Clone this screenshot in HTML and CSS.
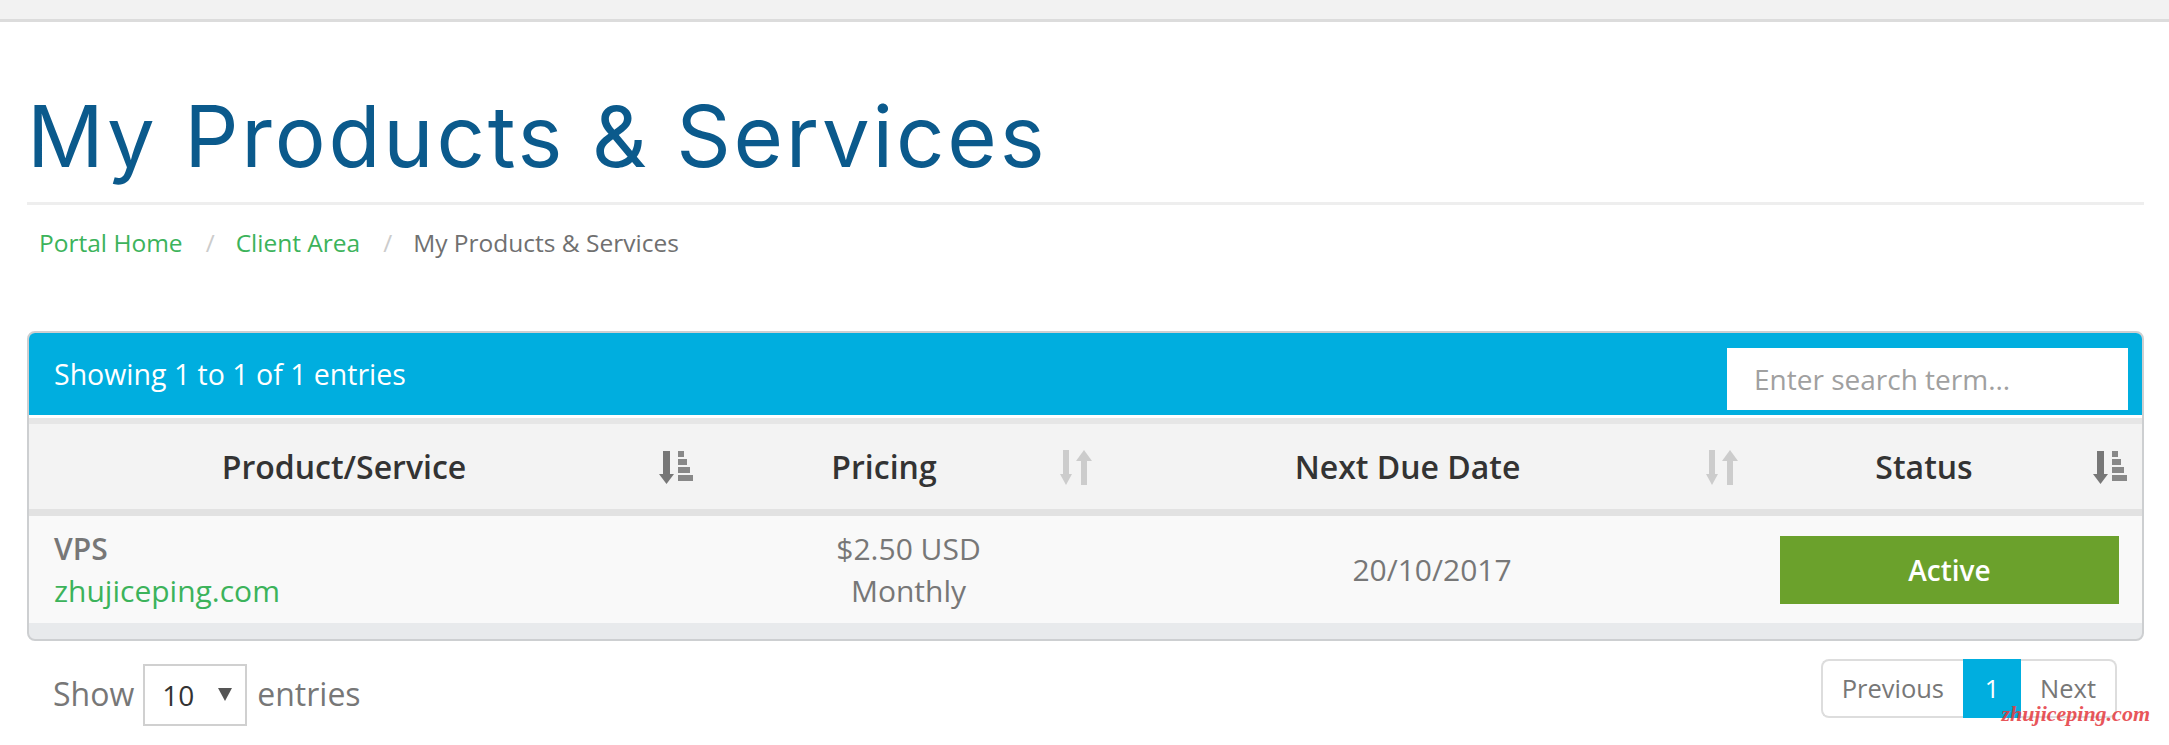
FILE: index.html
```html
<!DOCTYPE html>
<html lang="en">
<head>
    <meta charset="UTF-8">
    <meta name="viewport" content="width=device-width, initial-scale=1.0">
    <title>My Products &amp; Services</title>
    <link rel="stylesheet" href="styles.css">
</head>
<body>
    <div class="topbar"></div>

    <div class="main">
        <div class="page-header">
            <h1>My Products &amp; Services</h1>
        </div>

        <ol class="breadcrumb">
            <li><a href="#">Portal Home</a></li>
            <li><a href="#">Client Area</a></li>
            <li class="active">My Products &amp; Services</li>
        </ol>

        <div class="panel">
            <div class="panel-head">
                <div class="info">Showing 1 to 1 of 1 entries</div>
                <input class="search" type="text" placeholder="Enter search term...">
            </div>

            <table class="products">
                <colgroup>
                    <col class="c-product">
                    <col class="c-pricing">
                    <col class="c-due">
                    <col class="c-status">
                </colgroup>
                <thead>
                    <tr>
                        <th>
                            <div class="th-inner">
                                <span class="th-label">Product/Service</span>
                                <svg class="sort-icon" width="34" height="36" viewBox="0 0 34 36">
                                    <rect x="4" y="2" width="7" height="25" fill="#777"/>
                                    <polygon points="0,25 15,25 7.5,35" fill="#777"/>
                                    <rect x="19" y="2" width="6" height="6" fill="#888"/>
                                    <rect x="19" y="10" width="9" height="6" fill="#888"/>
                                    <rect x="19" y="18" width="12" height="6" fill="#888"/>
                                    <rect x="19" y="26" width="15" height="6" fill="#888"/>
                                </svg>
                            </div>
                        </th>
                        <th>
                            <div class="th-inner">
                                <span class="th-label">Pricing</span>
                                <svg class="sort-icon" width="34" height="36" viewBox="0 0 34 36">
                                    <rect x="3" y="1" width="6" height="26" fill="#ccc"/>
                                    <polygon points="0,25 12,25 6,36" fill="#ccc"/>
                                    <rect x="21" y="10" width="6" height="26" fill="#ccc"/>
                                    <polygon points="16,12 32,12 24,1" fill="#ccc"/>
                                </svg>
                            </div>
                        </th>
                        <th>
                            <div class="th-inner">
                                <span class="th-label">Next Due Date</span>
                                <svg class="sort-icon" width="34" height="36" viewBox="0 0 34 36">
                                    <rect x="3" y="1" width="6" height="26" fill="#ccc"/>
                                    <polygon points="0,25 12,25 6,36" fill="#ccc"/>
                                    <rect x="21" y="10" width="6" height="26" fill="#ccc"/>
                                    <polygon points="16,12 32,12 24,1" fill="#ccc"/>
                                </svg>
                            </div>
                        </th>
                        <th>
                            <div class="th-inner">
                                <span class="th-label">Status</span>
                                <svg class="sort-icon" width="34" height="36" viewBox="0 0 34 36">
                                    <rect x="4" y="2" width="7" height="25" fill="#777"/>
                                    <polygon points="0,25 15,25 7.5,35" fill="#777"/>
                                    <rect x="19" y="2" width="6" height="6" fill="#888"/>
                                    <rect x="19" y="10" width="9" height="6" fill="#888"/>
                                    <rect x="19" y="18" width="12" height="6" fill="#888"/>
                                    <rect x="19" y="26" width="15" height="6" fill="#888"/>
                                </svg>
                            </div>
                        </th>
                    </tr>
                </thead>
                <tbody>
                    <tr>
                        <td class="product">
                            <strong>VPS</strong><br>
                            <a href="#">zhujiceping.com</a>
                        </td>
                        <td class="center">$2.50 USD<br>Monthly</td>
                        <td class="center">20/10/2017</td>
                        <td class="center"><span class="status-active">Active</span></td>
                    </tr>
                </tbody>
            </table>
            <div class="panel-foot"></div>
        </div>

        <div class="table-footer">
            <div class="length">
                Show
                <span class="select-wrap">
                    <select>
                        <option>10</option>
                        <option>25</option>
                        <option>50</option>
                    </select>
                    <svg class="select-arrow" width="14" height="13" viewBox="0 0 14 13">
                        <polygon points="0,0 14,0 7,13" fill="#555"/>
                    </svg>
                </span>
                entries
            </div>

            <ul class="pagination">
                <li><a href="#">Previous</a></li>
                <li class="active"><a href="#">1</a></li>
                <li><a href="#">Next</a></li>
            </ul>

            <span class="watermark">zhujiceping.com</span>
        </div>
    </div>
</body>
</html>
```

FILE: styles.css
```css
/* Global */
body {
    margin: 0;
    font-family: 'Open Sans', 'Noto Sans', sans-serif;
    color: #333;
    background: #fff;
}

a {
    text-decoration: none;
}

.topbar {
    height: 19px;
    background-color: #f2f2f2;
    border-bottom: 3px solid #dcdcdc;
}

.main {
    padding: 0 25px 0 27px;
}

/* Page title */
.page-header {
    border-bottom: 3px solid #eee;
    padding-bottom: 22px;
}

.page-header h1 {
    margin: 72px 0 0 0;
    padding-left: 0;
    font-family: 'Inter', 'Open Sans', sans-serif;
    font-weight: 400;
    font-size: 85px;
    line-height: 86px;
    color: #0b5a8c;
    letter-spacing: 2.8px;
}

/* Breadcrumb */
.breadcrumb {
    list-style: none;
    margin: 20px 0 0 0;
    padding: 0 0 0 12px;
    display: flex;
    font-size: 24.5px;
    line-height: 36px;
}

.breadcrumb li + li::before {
    content: "/";
    color: #ccc;
    padding: 0 21px 0 23px;
}

.breadcrumb a {
    color: #3cb35b;
}

.breadcrumb .active {
    color: #707070;
}

/* Panel with table */
.panel {
    margin-top: 70px;
    border: 2px solid #cdcfd1;
    border-radius: 8px;
    overflow: hidden;
    background-color: #e8eaec;
}

.panel-head {
    height: 82px;
    background-color: #00aedf;
    display: flex;
    justify-content: space-between;
    align-items: center;
    padding: 0 14px 0 25px;
    border-bottom: 3px solid #fff;
}

.panel-head .info {
    color: #fff;
    font-size: 28.5px;
}

.search {
    align-self: flex-end;
    margin-bottom: 5px;
    width: 401px;
    height: 62px;
    box-sizing: border-box;
    border: none;
    outline: none;
    padding: 0 0 0 27px;
    font-family: 'Open Sans', sans-serif;
    font-size: 28px;
    color: #555;
    background: #fff;
}

.search::placeholder {
    color: #a0a0a0;
}

.products {
    width: 100%;
    border-collapse: collapse;
    table-layout: fixed;
}

.c-product { width: 679px; }
.c-pricing { width: 401px; }
.c-due { width: 646px; }

.products thead th {
    background-color: #f3f3f3;
    border-top: 6px solid #e6e6e6;
    border-bottom: 7px solid #e2e2e2;
    height: 85px;
    padding: 0;
    font-size: 32px;
    font-weight: 600;
    color: #333;
}

.th-inner {
    display: flex;
    align-items: center;
}

.th-label {
    flex: 1;
    text-align: center;
}

.sort-icon {
    margin-right: 15px;
    flex-shrink: 0;
}

.products tbody td {
    background-color: #f9f9f9;
    height: 107px;
    padding: 0 25px;
    font-size: 30px;
    line-height: 42px;
    color: #777;
    vertical-align: middle;
}

.products td.center {
    text-align: center;
}

.products td.product {
    padding-left: 25px;
}

.products td.product strong {
    font-weight: 600;
}

.products td.product a {
    color: #3cb35b;
}

.status-active {
    display: block;
    height: 68px;
    line-height: 68px;
    background-color: #6ba12c;
    color: #fff;
    font-size: 28px;
    font-weight: 600;
    margin-right: -2px;
}

.panel-foot {
    height: 16px;
}

/* Footer: length and pagination */
.table-footer {
    position: relative;
    display: flex;
    justify-content: space-between;
    align-items: flex-start;
    padding: 0 27px 0 26px;
}

.length {
    display: flex;
    align-items: center;
    margin-top: 19px;
    font-size: 32px;
    color: #777;
}

.select-wrap {
    position: relative;
    margin: 4px 10px 0 9px;
}

.select-wrap select {
    appearance: none;
    -webkit-appearance: none;
    box-sizing: border-box;
    width: 104px;
    height: 62px;
    border: 2px solid #d0d0d0;
    border-radius: 0;
    background: #fff;
    padding: 0 0 0 17px;
    font-family: 'Open Sans', sans-serif;
    font-size: 28px;
    color: #333;
    display: block;
}

.select-arrow {
    position: absolute;
    left: 75px;
    top: 24px;
    pointer-events: none;
}

.pagination {
    list-style: none;
    margin: 18px 0 0 0;
    padding: 0;
    display: flex;
    font-size: 25.5px;
}

.pagination a {
    display: block;
    height: 55px;
    line-height: 55px;
    padding: 0 19px;
    color: #777;
    border-top: 2px solid #ddd;
    border-bottom: 2px solid #ddd;
    background: #fff;
}

.pagination li:first-child a {
    border-left: 2px solid #ddd;
    border-radius: 8px 0 0 8px;
}

.pagination li:last-child a {
    border-right: 2px solid #ddd;
    border-radius: 0 8px 8px 0;
}

.pagination li.active a {
    background-color: #00aedf;
    border-color: #00aedf;
    color: #fff;
    width: 20px;
    text-align: center;
}

.watermark {
    position: absolute;
    right: -6px;
    top: 62px;
    font-family: 'Liberation Serif', serif;
    font-style: italic;
    font-weight: bold;
    font-size: 22px;
    line-height: 22px;
    color: #e5393e;
    opacity: 0.85;
}
```
